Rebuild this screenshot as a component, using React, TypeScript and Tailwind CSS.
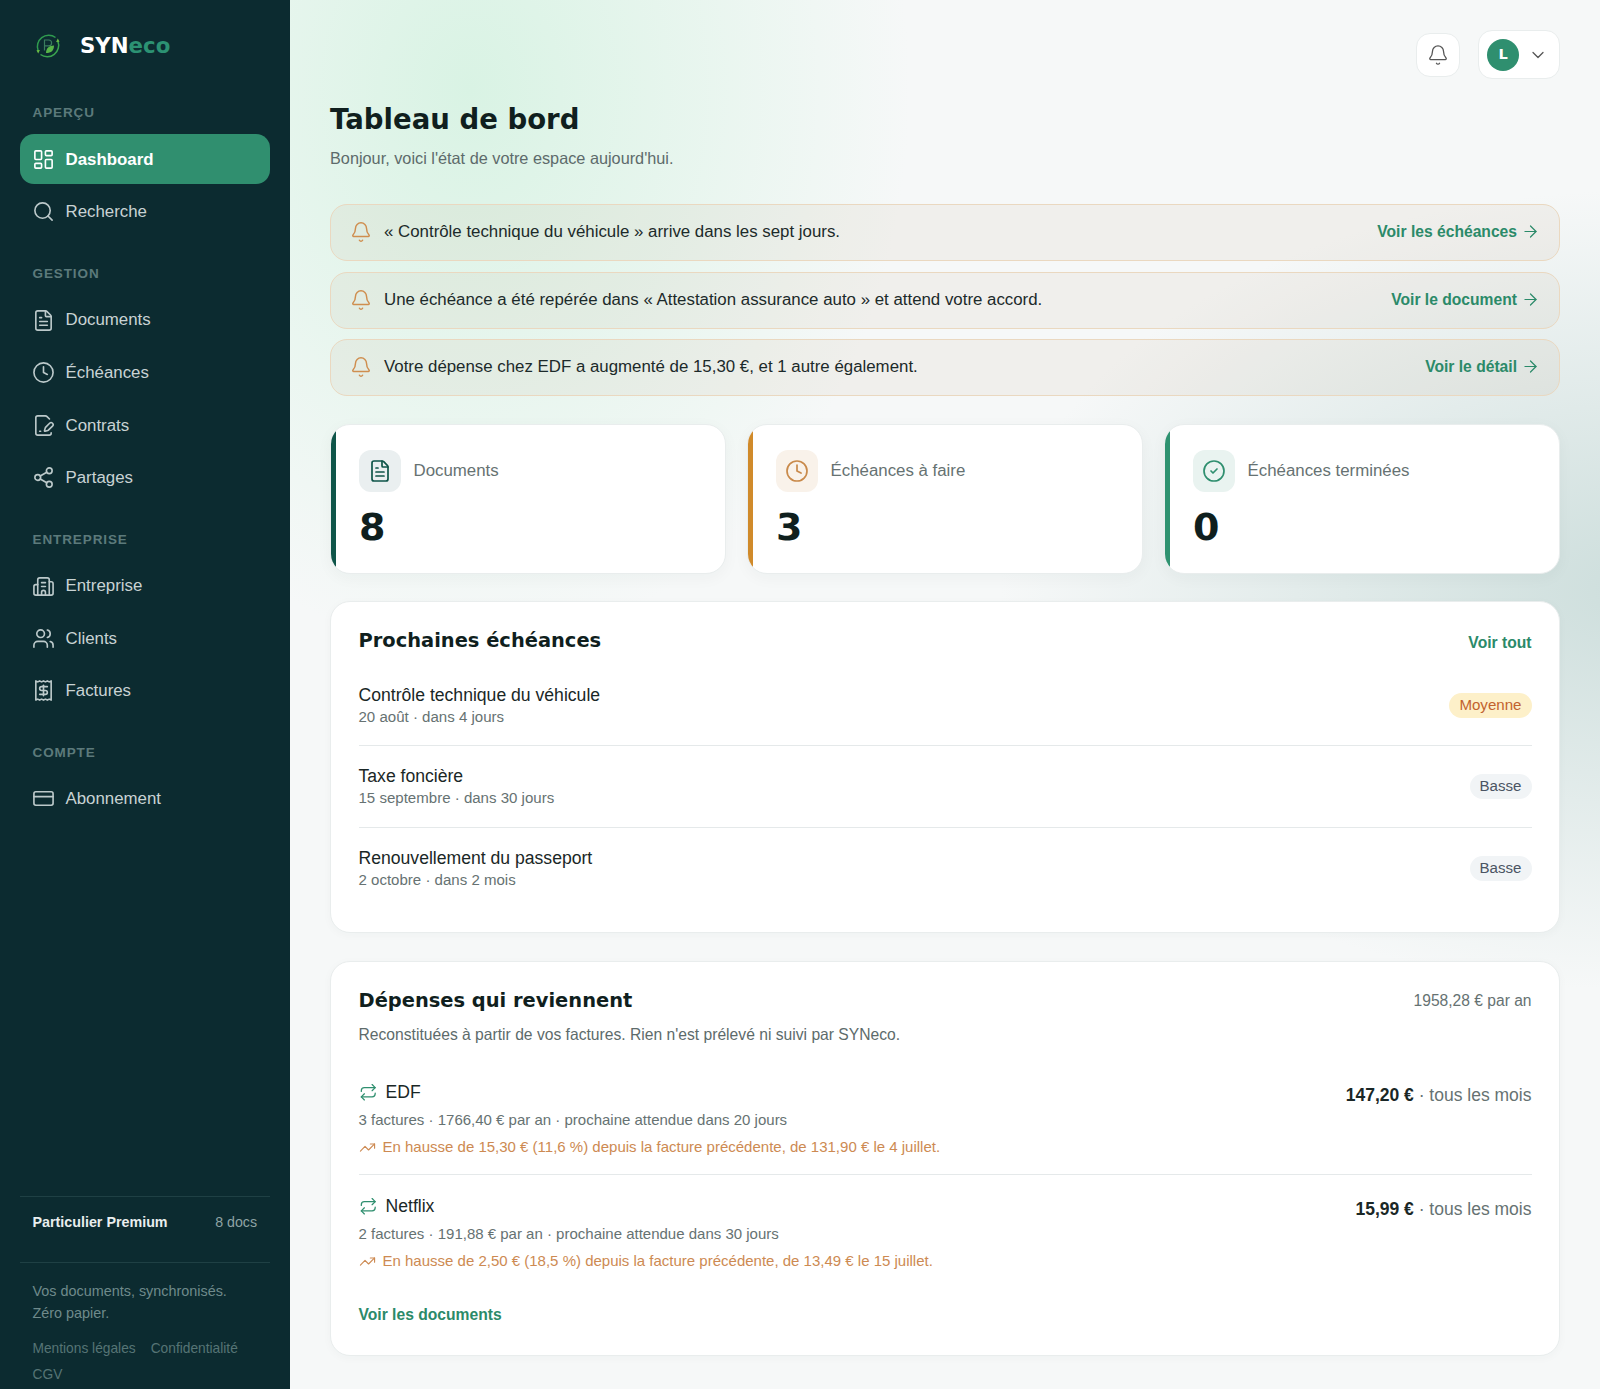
import React from "react";
import {
  LayoutDashboard, Search, FileText, Clock, FileSignature, Share2, Building2, Users, Receipt, CreditCard,
  Bell, ChevronDown, ArrowRight, CircleCheck, Repeat, TrendingUp, type LucideIcon,
} from "lucide-react";

function Logo() {
  return (
    <svg width="28" height="28" viewBox="0 0 28 28" fill="none">
      <path d="M4.2 19A11.4 11.4 0 0 1 21.5 5.5" stroke="#2f9b4f" strokeWidth="1.5" />
      <path d="M23.8 9A11.4 11.4 0 0 1 6.5 22.5" stroke="#3aa34f" strokeWidth="1.5" />
      <path d="M23.8 6.5l1.7 3.2-3.4.4zM4.2 21.5l-1.7-3.2 3.4-.4z" fill="#6cbf45" />
      <path d="M10.5 18.5V8h4.2a2.9 2.9 0 0 1 0 5.8h-4.2" stroke="#3b7d5e" strokeWidth="1.2" />
      <path d="M12 21c0-4.8 3-7.6 8-7.6 0 5-2.6 7.6-8 7.6z" fill="#58b548" />
    </svg>
  );
}

function NavItem({ icon: Icon, label, active }: { icon: LucideIcon; label: string; active?: boolean }) {
  return (
    <a
      className={
        active
          ? "flex h-[50px] items-center gap-[10.5px] rounded-[14px] bg-[#308f6f] px-3 text-[16.85px] font-bold text-white"
          : "flex h-[50px] items-center gap-[10.5px] rounded-[14px] px-3 text-[16.85px] text-[#c9d3d4]"
      }
    >
      <Icon size={23} strokeWidth={1.7} className={active ? "text-white" : "text-[#bcc9ca]"} />
      <span>{label}</span>
    </a>
  );
}

function SectionLabel({ children, className }: { children: string; className: string }) {
  return (
    <div className={"pl-[12.5px] text-[13.5px] font-bold tracking-[0.9px] text-[#5c7a7b] uppercase " + className}>{children}</div>
  );
}

function Sidebar() {
  return (
    <aside className="flex w-[290px] shrink-0 flex-col bg-[#0c2b30] px-5 font-['Liberation_Sans',sans-serif]">
      <div className="flex h-[92px] items-center gap-[18px] pl-[14px]">
        <Logo />
        <div className="font-['DejaVu_Sans',sans-serif] text-[21.3px] font-bold text-white">
          SYN<span className="text-[#2c9273]">eco</span>
        </div>
      </div>
      <SectionLabel className="mt-[11px] mb-[11px]">Aperçu</SectionLabel>
      <div className="flex flex-col gap-[2.6px]">
        <NavItem icon={LayoutDashboard} label="Dashboard" active />
        <NavItem icon={Search} label="Recherche" />
      </div>
      <SectionLabel className="mt-[27px] mb-[11px]">Gestion</SectionLabel>
      <div className="flex flex-col gap-[2.6px]">
        <NavItem icon={FileText} label="Documents" />
        <NavItem icon={Clock} label="Échéances" />
        <NavItem icon={FileSignature} label="Contrats" />
        <NavItem icon={Share2} label="Partages" />
      </div>
      <SectionLabel className="mt-[27px] mb-[11px]">Entreprise</SectionLabel>
      <div className="flex flex-col gap-[2.4px]">
        <NavItem icon={Building2} label="Entreprise" />
        <NavItem icon={Users} label="Clients" />
        <NavItem icon={Receipt} label="Factures" />
      </div>
      <SectionLabel className="mt-[27px] mb-[10px]">Compte</SectionLabel>
      <NavItem icon={CreditCard} label="Abonnement" />
      <div className="mt-auto">
        <div className="flex h-[67px] items-center justify-between border-y border-[#1f4044] pr-[13px] pb-[12px] pl-[12.5px]">
          <span className="text-[14.3px] font-bold text-[#e9eeee]">Particulier Premium</span>
          <span className="text-[14.2px] text-[#8fa3a4]">8 docs</span>
        </div>
        <div className="mt-[17.5px] pl-[12.5px] text-[14.4px] leading-[22px] text-[#6f8a8b]">
          Vos documents, synchronisés.
          <br />
          Zéro papier.
        </div>
        <div className="mt-[12px] flex flex-wrap gap-x-[15px] pb-[2px] pl-[12.5px] text-[13.75px] leading-[26px] text-[#567475]">
          <span>Mentions légales</span>
          <span>Confidentialité</span>
          <span>CGV</span>
        </div>
      </div>
    </aside>
  );
}

function Alert({ text, link }: { text: string; link: string }) {
  return (
    <div className="flex h-[57px] items-center justify-between rounded-[17px] border-[1.5px] border-[#ead8c0] bg-[#b08a60]/[0.08] pr-[19px] pl-[19px]">
      <div className="flex items-center gap-[12px] text-[16.85px] text-[#1c2a2a]">
        <Bell size={22} strokeWidth={1.6} className="text-[#cf8e4f]" />
        <span className="-mt-[1px]">{text}</span>
      </div>
      <div className="-mt-[1px] flex items-center gap-[4px] text-[15.65px] font-bold text-[#2b8a69]">
        <span>{link}</span>
        <ArrowRight size={19} strokeWidth={1.5} />
      </div>
    </div>
  );
}

function Stat({
  icon: Icon, label, value, bar, boxBg, iconColor,
}: { icon: LucideIcon; label: string; value: string; bar: string; boxBg: string; iconColor: string }) {
  return (
    <div className="relative h-[150px] overflow-hidden rounded-[20px] border border-[#e9eded] bg-white pt-[25px] pl-[28px] shadow-[0_4px_16px_rgba(15,50,50,0.04)]">
      <div className={"absolute inset-y-0 left-0 w-[5px] " + bar} />
      <div className="flex items-center gap-[12.5px]">
        <div className={"flex h-[42px] w-[42px] items-center justify-center rounded-[12px] " + boxBg}>
          <Icon size={24} strokeWidth={1.7} className={iconColor} />
        </div>
        <div className="text-[16.85px] leading-[22px] text-[#667272]">{label}</div>
      </div>
      <div className="mt-[11px] font-['DejaVu_Sans',sans-serif] text-[38px] leading-[48px] font-bold text-[#0f1f1e]">{value}</div>
    </div>
  );
}

function Badge({ children, tone }: { children: string; tone: "amber" | "gray" }) {
  return (
    <span
      className={
        tone === "amber"
          ? "flex h-[25px] items-center rounded-full bg-[#fdf0c9] px-[10px] text-[15.1px] text-[#c2622e]"
          : "flex h-[25px] items-center rounded-full bg-[#f1f4f6] px-[10px] text-[15.1px] text-[#4b5563]"
      }
    >
      {children}
    </span>
  );
}

function DueRow({ title, sub, badge, tone, border }: { title: string; sub: string; badge: string; tone: "amber" | "gray"; border?: boolean }) {
  return (
    <div className={"flex h-[81.3px] items-center justify-between " + (border ? "border-b border-[#e5e9ea]" : "")}>
      <div className="-mt-[1px]">
        <div className="text-[17.6px] leading-[24px] text-[#1a2726]">{title}</div>
        <div className="text-[15.05px] leading-[20px] text-[#667272]">{sub}</div>
      </div>
      <Badge tone={tone}>{badge}</Badge>
    </div>
  );
}

function Recurring({ name, price, sub, trend, border }: { name: string; price: string; sub: string; trend: string; border?: boolean }) {
  return (
    <div className={"flex h-[96px] justify-between " + (border ? "border-b border-[#e5e9ea]" : "")}>
      <div>
        <div className="flex h-[26px] items-center gap-[8.5px] text-[17.6px] text-[#1a2726]">
          <Repeat size={18.5} strokeWidth={1.6} className="text-[#2f8f6f]" />
          <span>{name}</span>
        </div>
        <div className="mt-[4.5px] text-[15px] leading-[20px] text-[#667272]">{sub}</div>
        <div className="mt-[7.5px] flex items-center gap-[7px] text-[15px] leading-[20px] text-[#cd8a52]">
          <TrendingUp size={17} strokeWidth={1.6} />
          <span>{trend}</span>
        </div>
      </div>
      <div className="pt-[4px] text-[17.5px] leading-[24px] text-[#667272]">
        <span className="font-bold text-[#1a2726]">{price}</span> · tous les mois
      </div>
    </div>
  );
}

function H2({ children }: { children: string }) {
  return <h2 className="font-['DejaVu_Sans',sans-serif] text-[19.45px] leading-[28px] font-bold text-[#101f1e]">{children}</h2>;
}

export default function App() {
  return (
    <div className="flex min-h-[1389px] w-full">
      <Sidebar />
      <main className="flex-1 bg-[#f6f8f8] bg-[radial-gradient(ellipse_440px_560px_at_180px_90px,#d9f3e4_0%,rgba(217,243,228,0)_100%),radial-gradient(ellipse_640px_400px_at_1350px_590px,#cddedc_0%,rgba(205,222,220,0)_100%)] px-10 font-['Liberation_Sans',sans-serif]">
        <div className="flex justify-end gap-[18px] pt-[30px]">
          <button className="mt-[3px] flex h-[44px] w-[44px] items-center justify-center rounded-[14px] border border-[#e9eded] bg-white text-[#555]">
            <Bell size={22} strokeWidth={1.4} />
          </button>
          <button className="flex h-[49px] w-[82px] items-center rounded-[14px] border border-[#e9eded] bg-white pl-[8px] text-[#555]">
            <span className="flex h-[32px] w-[32px] items-center justify-center rounded-full bg-[#2f8f6f] font-['DejaVu_Sans',sans-serif] text-[14.5px] font-bold text-white">L</span>
            <ChevronDown size={20} strokeWidth={1.5} className="ml-[9px]" />
          </button>
        </div>
        <h1 className="mt-[21px] font-['DejaVu_Sans',sans-serif] text-[27.55px] leading-[38px] font-bold text-[#101f1e]">Tableau de bord</h1>
        <p className="mt-[8px] text-[16.27px] leading-[24px] text-[#5d6b6b]">Bonjour, voici l'état de votre espace aujourd'hui.</p>
        <div className="mt-[34px] flex flex-col gap-[10.5px]">
          <Alert text="« Contrôle technique du véhicule » arrive dans les sept jours." link="Voir les échéances" />
          <Alert text="Une échéance a été repérée dans « Attestation assurance auto » et attend votre accord." link="Voir le document" />
          <Alert text="Votre dépense chez EDF a augmenté de 15,30 €, et 1 autre également." link="Voir le détail" />
        </div>
        <div className="mt-[28px] grid grid-cols-3 gap-[21px]">
          <Stat icon={FileText} label="Documents" value="8" bar="bg-[#0f5549]" boxBg="bg-[#eaeff0]" iconColor="text-[#0f5549]" />
          <Stat icon={Clock} label="Échéances à faire" value="3" bar="bg-[#d08a2a]" boxBg="bg-[#f9f2ea]" iconColor="text-[#c98a4b]" />
          <Stat icon={CircleCheck} label="Échéances terminées" value="0" bar="bg-[#2f9270]" boxBg="bg-[#e9f3f0]" iconColor="text-[#2f8f6f]" />
        </div>
        <section className="mt-[27px] h-[332px] rounded-[20px] border border-[#e9eded] bg-white px-[27.5px] pt-[25px] shadow-[0_2px_10px_rgba(15,50,50,0.03)]">
          <div className="flex items-center justify-between">
            <H2>Prochaines échéances</H2>
            <span className="mt-[4px] text-[15.65px] font-bold text-[#2b8a69]">Voir tout</span>
          </div>
          <div className="mt-[10px]">
            <DueRow title="Contrôle technique du véhicule" sub="20 août · dans 4 jours" badge="Moyenne" tone="amber" border />
            <DueRow title="Taxe foncière" sub="15 septembre · dans 30 jours" badge="Basse" tone="gray" border />
            <DueRow title="Renouvellement du passeport" sub="2 octobre · dans 2 mois" badge="Basse" tone="gray" />
          </div>
        </section>
        <section className="mt-[28px] mb-[34px] h-[395px] rounded-[20px] border border-[#e9eded] bg-white px-[27.5px] pt-[25px] shadow-[0_2px_10px_rgba(15,50,50,0.03)]">
          <div className="flex items-center justify-between">
            <H2>Dépenses qui reviennent</H2>
            <span className="text-[15.6px] text-[#667272]">1958,28 € par an</span>
          </div>
          <p className="mt-[9px] text-[15.66px] leading-[22px] text-[#5d6b6b]">Reconstituées à partir de vos factures. Rien n'est prélevé ni suivi par SYNeco.</p>
          <div className="mt-[33px] flex flex-col gap-[18px]">
            <Recurring name="EDF" price="147,20 €" sub="3 factures · 1766,40 € par an · prochaine attendue dans 20 jours" trend="En hausse de 15,30 € (11,6 %) depuis la facture précédente, de 131,90 € le 4 juillet." border />
            <Recurring name="Netflix" price="15,99 €" sub="2 factures · 191,88 € par an · prochaine attendue dans 30 jours" trend="En hausse de 2,50 € (18,5 %) depuis la facture précédente, de 13,49 € le 15 juillet." />
          </div>
          <div className="mt-[14px] text-[15.65px] font-bold text-[#2b8a69]">Voir les documents</div>
        </section>
      </main>
    </div>
  );
}
